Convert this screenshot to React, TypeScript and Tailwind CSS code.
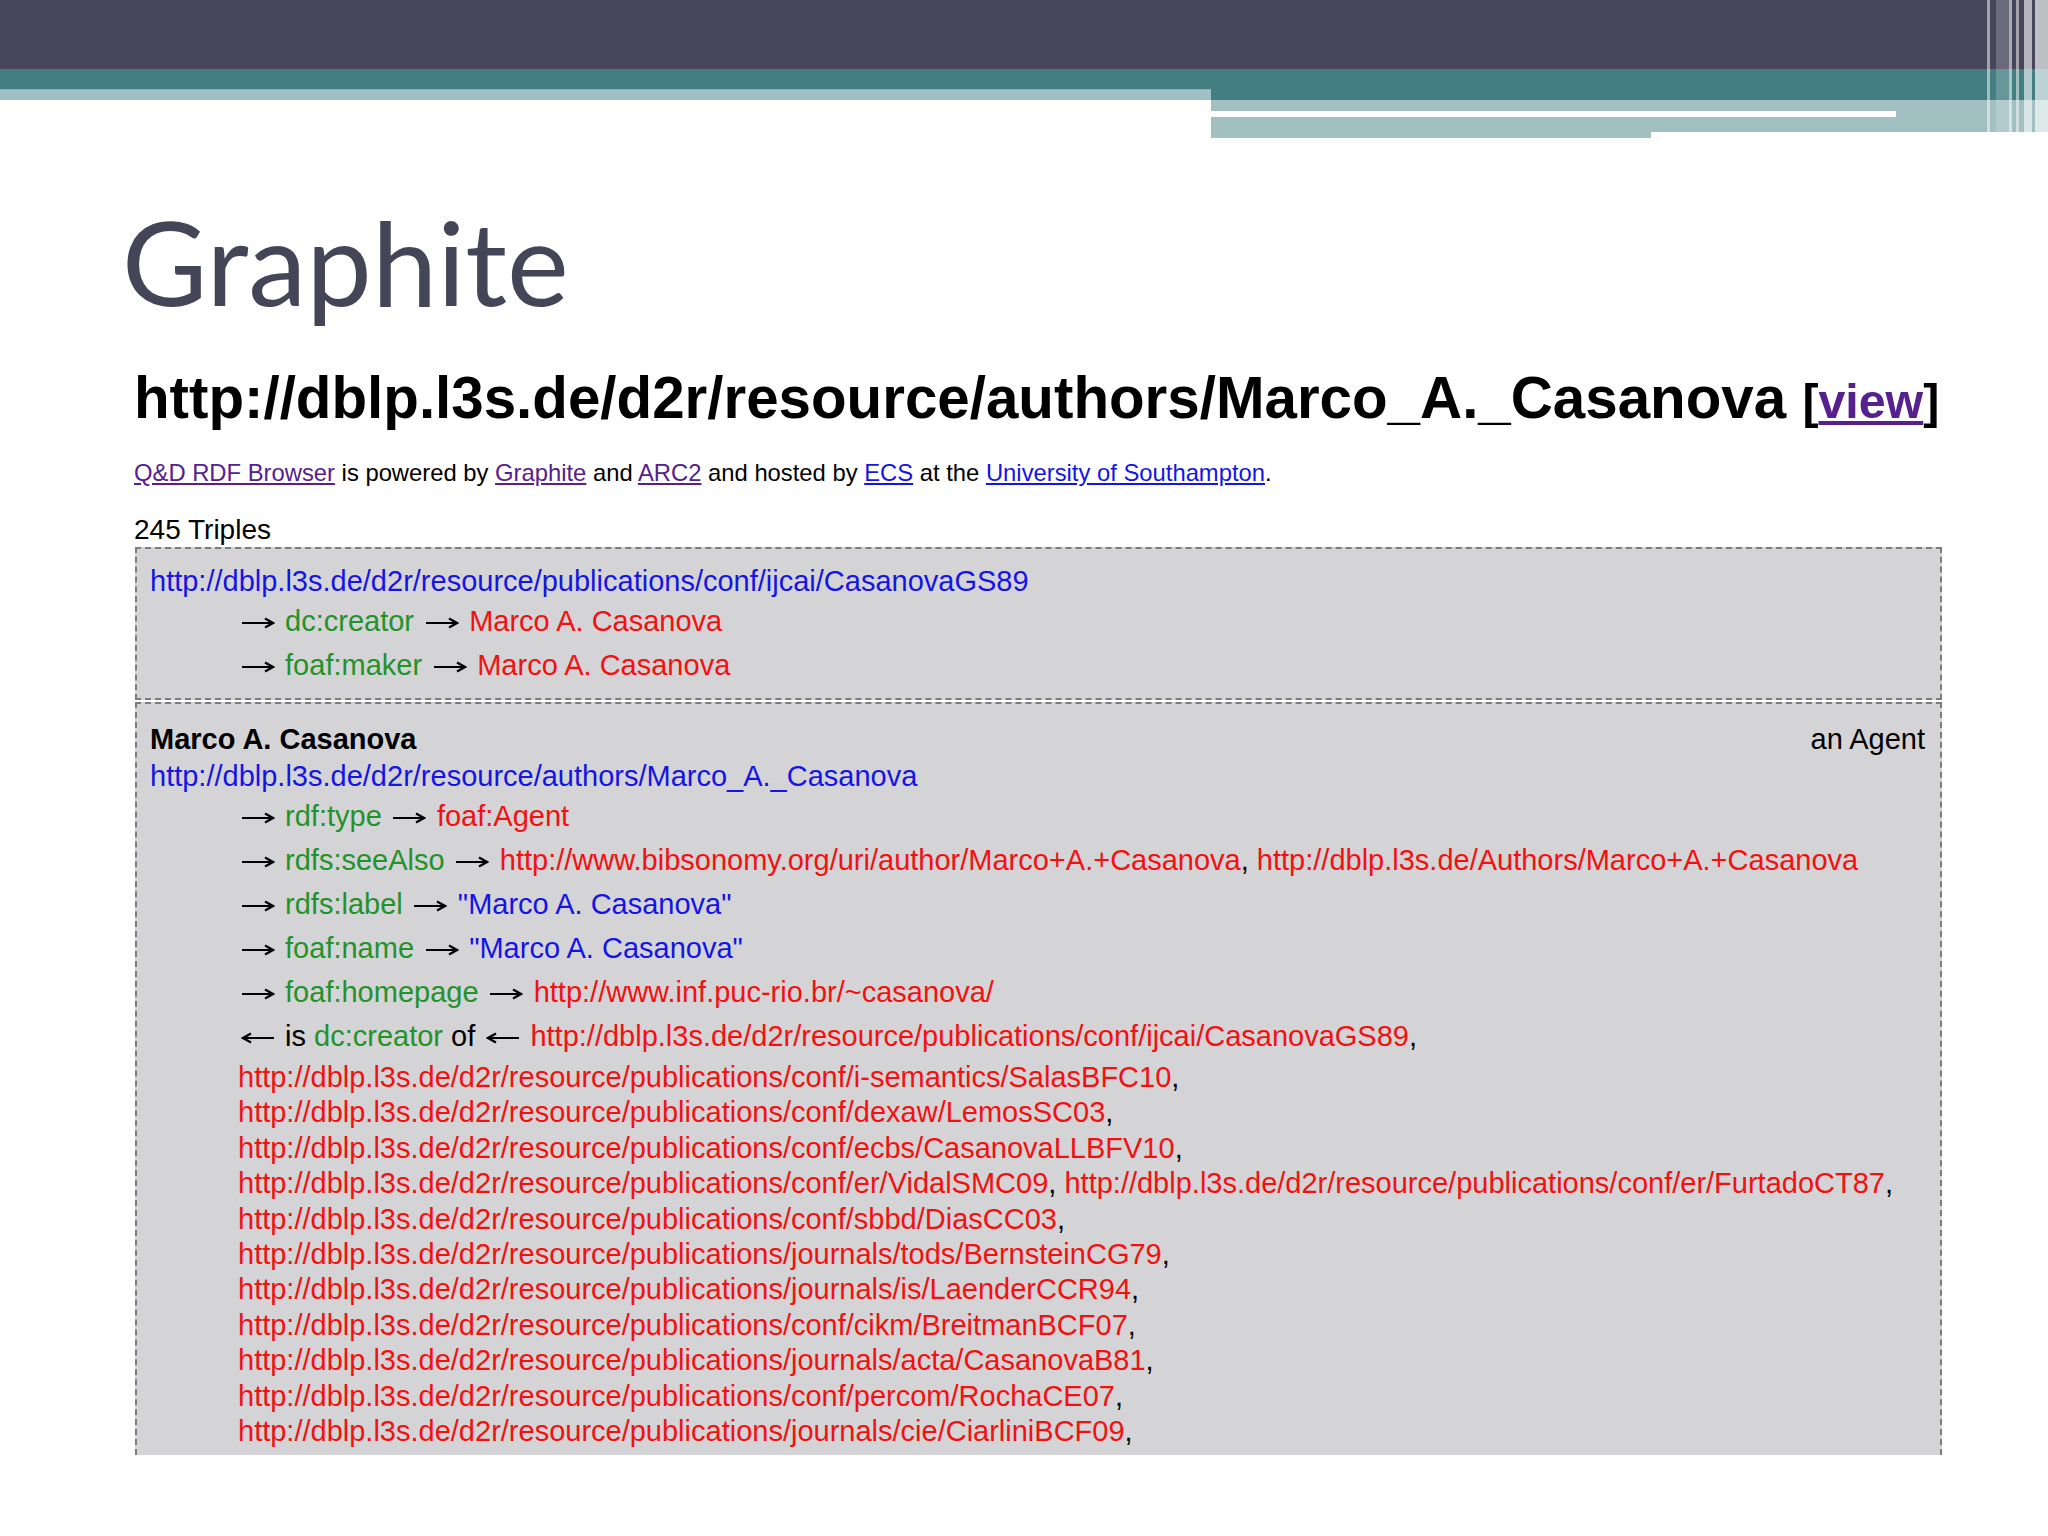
import React from 'react';

const BLUE = 'text-[#1414e6]';
const RED = 'text-[#f41010]';
const GREEN = 'text-[#23922a]';

const wrapped = [
  ['http://dblp.l3s.de/d2r/resource/publications/conf/i-semantics/SalasBFC10'],
  ['http://dblp.l3s.de/d2r/resource/publications/conf/dexaw/LemosSC03'],
  ['http://dblp.l3s.de/d2r/resource/publications/conf/ecbs/CasanovaLLBFV10'],
  [
    'http://dblp.l3s.de/d2r/resource/publications/conf/er/VidalSMC09',
    'http://dblp.l3s.de/d2r/resource/publications/conf/er/FurtadoCT87',
  ],
  ['http://dblp.l3s.de/d2r/resource/publications/conf/sbbd/DiasCC03'],
  ['http://dblp.l3s.de/d2r/resource/publications/journals/tods/BernsteinCG79'],
  ['http://dblp.l3s.de/d2r/resource/publications/journals/is/LaenderCCR94'],
  ['http://dblp.l3s.de/d2r/resource/publications/conf/cikm/BreitmanBCF07'],
  ['http://dblp.l3s.de/d2r/resource/publications/journals/acta/CasanovaB81'],
  ['http://dblp.l3s.de/d2r/resource/publications/conf/percom/RochaCE07'],
  ['http://dblp.l3s.de/d2r/resource/publications/journals/cie/CiarliniBCF09'],
];

const HeaderBands = () => (
  <svg width="2048" height="140" className="block" viewBox="0 0 2048 140">
    <rect x="0" y="0" width="2048" height="69" fill="#464559" />
    <rect x="0" y="69" width="2048" height="31" fill="#437e83" />
    <rect x="0" y="89" width="1211" height="11" fill="#a3bfc6" />
    <rect x="0" y="89" width="1211" height="1" fill="#8fb0b6" />
    <rect x="1211" y="100" width="837" height="32" fill="#a2bfc2" />
    <rect x="1211" y="132" width="440" height="6" fill="#a2bfc2" />
    <rect x="1211" y="111" width="685" height="6" fill="#ffffff" />
    <rect x="1987" y="0" width="3" height="132" fill="#ffffff" opacity="0.5" />
    <rect x="1996" y="0" width="13" height="138" fill="#ffffff" opacity="0.2" />
    <rect x="2009" y="0" width="3" height="138" fill="#ffffff" opacity="0.55" />
    <rect x="2016" y="0" width="3" height="138" fill="#ffffff" opacity="0.5" />
    <rect x="2024" y="0" width="8" height="138" fill="#ffffff" opacity="0.6" />
    <rect x="2035" y="0" width="13" height="138" fill="#ffffff" opacity="0.65" />
  </svg>
);

// long thin arrow like the browser's ⟶ glyph
const Arrow = ({ back }: { back?: boolean }) => (
  <svg
    width="34"
    height="14"
    viewBox="0 0 34 14"
    className={`inline-block align-middle mx-[2.5px] ${back ? '-scale-x-100' : ''}`}
  >
    <line x1="1" y1="7" x2="31" y2="7" stroke="#000" strokeWidth="2" />
    <path d="M24 2.5 L32 7 L24 11.5" fill="none" stroke="#000" strokeWidth="2.2" />
  </svg>
);

const Prop = ({ rel, children }: { rel: string; children: React.ReactNode }) => (
  <div className="pl-[88px] py-[4.5px] leading-[35px] whitespace-nowrap">
    <Arrow /> <span className={GREEN}>{rel}</span> <Arrow /> {children}
  </div>
);

export default function App() {
  return (
    <div className="w-[2048px] h-[1536px] bg-white overflow-hidden">
      <HeaderBands />

      {/* slide title */}
      <div className="pl-[122px] mt-[62px] h-[118px] text-[117px] leading-[118px] text-[#454558] font-['Lato',sans-serif]">
        Graphite
      </div>

      {/* browser screenshot */}
      <div className="pl-[134px] pr-[106px] font-['Liberation_Sans',Arial,sans-serif] text-black">
        <h1 className="mt-[49px] text-[58.3px] leading-[58px] font-bold whitespace-nowrap">
          http://dblp.l3s.de/d2r/resource/authors/Marco_A._Casanova{' '}
          <span className="text-[48.3px]">
            [<span className="text-[#56208e] underline">view</span>]
          </span>
        </h1>

        <p className="mt-[30px] text-[23.8px] leading-[26px] whitespace-nowrap">
          <span className="text-[#56208e] underline">Q&amp;D RDF Browser</span> is powered by{' '}
          <span className="text-[#56208e] underline">Graphite</span> and{' '}
          <span className="text-[#56208e] underline">ARC2</span> and hosted by{' '}
          <span className="text-[#1414e6] underline">ECS</span> at the{' '}
          <span className="text-[#1414e6] underline">University of Southampton</span>.
        </p>

        <div className="mt-[28px] text-[28px] leading-[32px]">245 Triples</div>

        <div className="text-[29px]">
          {/* first resource */}
          <div className="mt-[1px] ml-[1px] border-2 border-dashed border-[#7c7c7c] bg-[#d4d4d6] pt-[15px] pb-[11px] pl-[13px] pr-[15px]">
            <div className={`leading-[35px] ${BLUE}`}>
              http://dblp.l3s.de/d2r/resource/publications/conf/ijcai/CasanovaGS89
            </div>
            <Prop rel="dc:creator">
              <span className={RED}>Marco A. Casanova</span>
            </Prop>
            <Prop rel="foaf:maker">
              <span className={RED}>Marco A. Casanova</span>
            </Prop>
          </div>

          {/* second resource */}
          <div className="mt-[2px] ml-[1px] h-[753px] overflow-hidden border-2 border-b-0 border-dashed border-[#7c7c7c] bg-[#d4d4d6] pt-[18px] pl-[13px] pr-[15px]">
            <div className="flex justify-between leading-[35px] mb-[2px]">
              <span className="font-bold">Marco A. Casanova</span>
              <span>an Agent</span>
            </div>
            <div className={`leading-[35px] ${BLUE}`}>
              http://dblp.l3s.de/d2r/resource/authors/Marco_A._Casanova
            </div>
            <Prop rel="rdf:type">
              <span className={RED}>foaf:Agent</span>
            </Prop>
            <Prop rel="rdfs:seeAlso">
              <span className={RED}>http://www.bibsonomy.org/uri/author/Marco+A.+Casanova</span>,{' '}
              <span className={RED}>http://dblp.l3s.de/Authors/Marco+A.+Casanova</span>
            </Prop>
            <Prop rel="rdfs:label">
              <span className={BLUE}>"Marco A. Casanova"</span>
            </Prop>
            <Prop rel="foaf:name">
              <span className={BLUE}>"Marco A. Casanova"</span>
            </Prop>
            <Prop rel="foaf:homepage">
              <span className={RED}>http://www.inf.puc-rio.br/~casanova/</span>
            </Prop>
            <div className="pl-[88px] py-[4.5px] leading-[35px] whitespace-nowrap">
              <Arrow back /> is <span className={GREEN}>dc:creator</span> of <Arrow back />{' '}
              <span className={RED}>http://dblp.l3s.de/d2r/resource/publications/conf/ijcai/CasanovaGS89</span>,
            </div>
            <div className="pl-[88px] pt-[2px] leading-[35.4px] whitespace-nowrap">
              {wrapped.map((line, i) => (
                <div key={i}>
                  {line.map((url, j) => (
                    <React.Fragment key={url}>
                      {j > 0 && ' '}
                      <span className={RED}>{url}</span>,
                    </React.Fragment>
                  ))}
                </div>
              ))}
            </div>
          </div>
        </div>
      </div>
    </div>
  );
}
